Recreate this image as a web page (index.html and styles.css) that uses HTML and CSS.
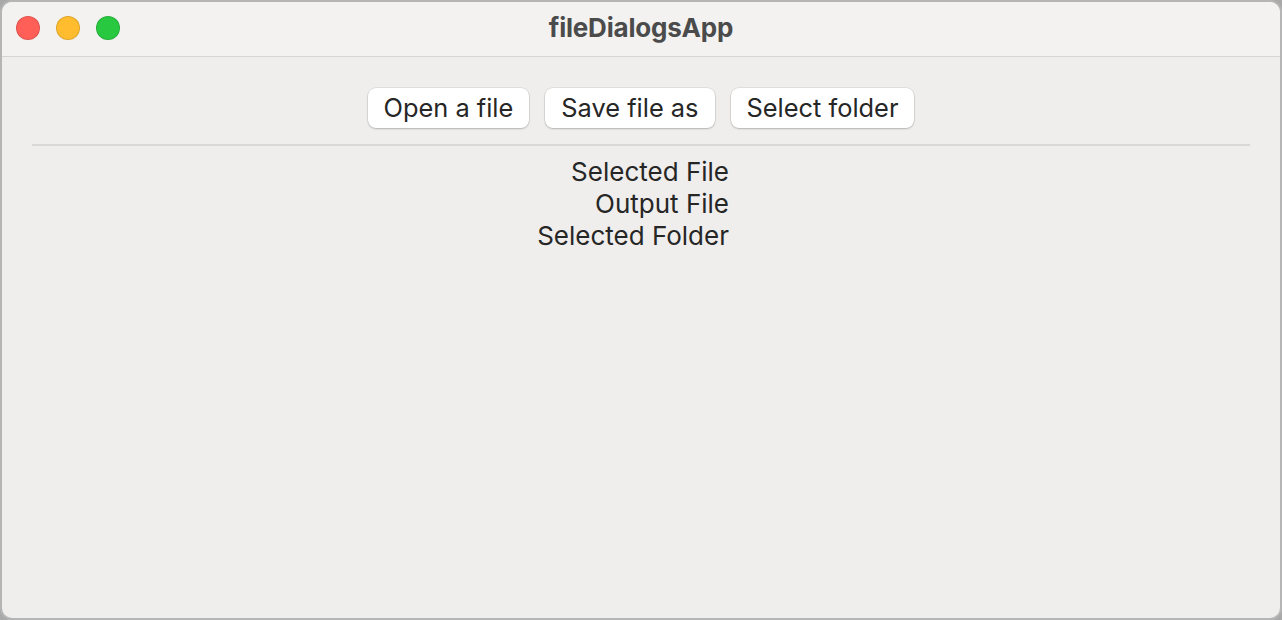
FILE: index.html
```html
<!DOCTYPE html>
<html lang="en">
<head>
  <meta charset="UTF-8">
  <title>fileDialogsApp</title>
  <link rel="stylesheet" href="styles.css">
</head>
<body>
  <div class="window">
    <!-- Title bar -->
    <div class="titlebar">
      <div class="lights">
        <span class="light red"></span>
        <span class="light yellow"></span>
        <span class="light green"></span>
      </div>
      <div class="title">fileDialogsApp</div>
    </div>

    <!-- Content -->
    <div class="content">
      <div class="buttons">
        <button>Open a file</button>
        <button>Save file as</button>
        <button>Select folder</button>
      </div>
      <hr class="divider">
      <div class="fields">
        <div class="label">Selected File</div><div class="value"></div>
        <div class="label">Output File</div><div class="value"></div>
        <div class="label">Selected Folder</div><div class="value"></div>
      </div>
    </div>
  </div>
</body>
</html>
```

FILE: styles.css
```css
html, body {
  margin: 0;
  padding: 0;
  height: 100%;
}

body {
  background-color: #a9a9a9;
  font-family: Inter, "Liberation Sans", Arial, sans-serif;
  color: #262626;
}

.window {
  box-sizing: border-box;
  height: 620px;
  width: 1282px;
  border: 2px solid #b5b5b5;
  border-radius: 12px;
  background-color: #efeeec;
  overflow: hidden;
  display: flex;
  flex-direction: column;
}

.titlebar {
  position: relative;
  height: 54px;
  background-color: #f3f2f1;
  border-bottom: 1px solid #d6d5d4;
  display: flex;
  align-items: center;
  justify-content: center;
}

.lights {
  position: absolute;
  left: 14px;
  top: 14px;
  display: flex;
  gap: 16px;
}

.light {
  width: 22px;
  height: 22px;
  border-radius: 50%;
  border: 1px solid rgba(0, 0, 0, 0.12);
}

.red { background: #ff5f57; }
.yellow { background: #febc2e; }
.green { background: #28c840; }

.title {
  font-size: 26px;
  font-weight: bold;
  color: #4b4b4b;
  letter-spacing: -0.2px;
  padding-bottom: 3px;
}

.content {
  padding: 31px 30px 0;
}

.buttons {
  display: flex;
  justify-content: center;
  gap: 16px;
}

.buttons button {
  font-family: inherit;
  font-size: 25.4px;
  color: #262626;
  background: #ffffff;
  border: none;
  border-radius: 8px;
  height: 40px;
  padding: 0 16px 2px;
  box-shadow: 0 0 0 0.5px rgba(0, 0, 0, 0.12), 0 1px 2px rgba(0, 0, 0, 0.2);
}

.divider {
  border: none;
  border-top: 2px solid #d9d8d6;
  margin: 16px 0 0;
}

.fields {
  display: grid;
  grid-template-columns: 697px 1fr;
  font-size: 26px;
  line-height: 32px;
  padding-top: 10px;
}

.label {
  text-align: right;
}
```
